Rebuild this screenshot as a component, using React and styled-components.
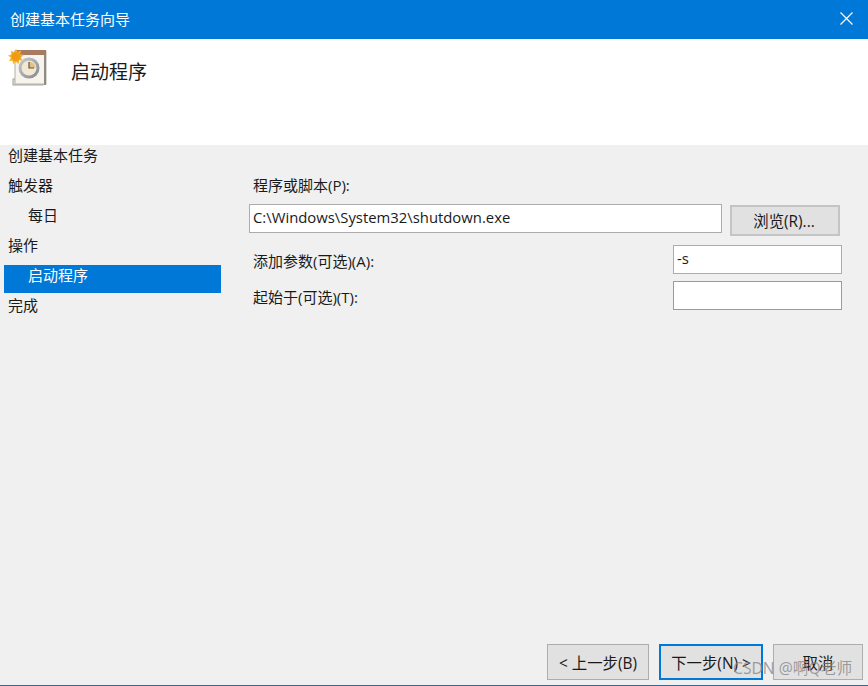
import React from 'react';
import styled, { createGlobalStyle } from 'styled-components';

const GlobalStyle = createGlobalStyle`
  html, body { margin: 0; padding: 0; background: #f0f0f0; }
  * { box-sizing: border-box; }
  body { font-family: "Open Sans", "Noto Sans CJK SC", sans-serif; color: #1a1a1a; }
`;

const Window = styled.div`
  position: relative;
  width: 868px;
  height: 686px;
  display: flex;
  flex-direction: column;
  overflow: hidden;
  background: #f0f0f0;
  border-bottom: 1px solid #0078d7;
`;

const TitleBar = styled.div`
  height: 39px;
  flex: none;
  background: #0078d7;
  color: #fff;
  font-size: 15px;
  padding: 0 15px 2px 10px;
  display: flex;
  align-items: center;
  justify-content: space-between;
`;

const Header = styled.div`
  height: 106px;
  flex: none;
  background: #fff;
  display: flex;
  align-items: flex-start;
  padding: 8px 0 0 7px;
  gap: 24px;
`;

const HeaderTitle = styled.div`
  font-size: 19px;
  line-height: 26px;
  margin-top: 12px;
`;

const Body = styled.div`
  flex: 1;
  display: flex;
  min-height: 0;
`;

const Sidebar = styled.div`
  width: 221px;
  flex: none;
  padding-left: 4px;
  display: flex;
  flex-direction: column;
  gap: 8px;
`;

const Step = styled.div`
  height: 22px;
  font-size: 15px;
  line-height: 20px;
  padding-left: ${p => (p.$sub ? 24 : 4)}px;
  color: #1a1a1a;
`;

const ActiveStep = styled(Step)`
  height: 28px;
  margin-bottom: -6px;
  color: #fff;
  background: #0078d7;
`;

const Content = styled.div`
  flex: 1;
  display: flex;
  flex-direction: column;
  justify-content: space-between;
  padding: 30px 5px 5px 28px;
`;

const Form = styled.div`
  display: flex;
  flex-direction: column;
`;

const Label = styled.div`
  font-size: 15px;
  height: 22px;
  line-height: 20px;
  padding-left: 4px;
`;

const FieldLabel = styled(Label)`
  margin-top: 5px;
`;

const PathRow = styled.div`
  display: flex;
  align-items: flex-start;
  gap: 8px;
  margin-top: 7px;
  margin-right: 23px;
`;

const TextBox = styled.div`
  height: 29px;
  background: #fff;
  border: 1px solid ${p => (p.$focus ? '#5ea8ec' : '#acacac')};
  font-size: 14.85px;
  line-height: 25px;
  padding-left: 3px;
  width: ${p => p.$width}px;
  color: #1a1a1a;
`;

const FieldRow = styled.div`
  display: flex;
  align-items: center;
  justify-content: space-between;
  margin-top: ${p => p.$top}px;
  margin-right: 21px;
`;

const Button = styled.div`
  width: ${p => p.$width}px;
  height: 36px;
  background: #e1e1e1;
  border: ${p => (p.$primary ? '2px solid #0078d7' : '1px solid #adadad')};
  font-size: 15.4px;
  display: flex;
  align-items: center;
  justify-content: center;
  color: #1a1a1a;
  flex: none;
`;

const BrowseButton = styled(Button)`
  height: 31px;
  margin-top: 1px;
  border: 2px solid #c4c4c4;
  padding-right: 2px;
`;

const Footer = styled.div`
  display: flex;
  justify-content: flex-end;
  gap: 10px;
`;

const Watermark = styled.div`
  position: absolute;
  left: 733px;
  top: 658px;
  font-size: 15.7px;
  line-height: 20px;
  color: rgba(130, 130, 130, 0.75);
  white-space: nowrap;
`;

const TaskIcon = () => (
  <svg width="40" height="40" viewBox="0 0 40 40">
    <defs>
      <radialGradient id="sun">
        <stop offset="0.45" stopColor="#f39a14" />
        <stop offset="1" stopColor="#fbd34a" />
      </radialGradient>
      <linearGradient id="ring" x1="0" y1="0" x2="1" y2="1">
        <stop offset="0" stopColor="#c9ccd0" />
        <stop offset="1" stopColor="#83878c" />
      </linearGradient>
    </defs>
    <rect x="6" y="32" width="30" height="6" fill="#e6e2dc" stroke="#a5a09a" />
    <rect x="8" y="4" width="31" height="33" fill="#f7f4ee" stroke="#b5aea5" />
    <rect x="8" y="3" width="31" height="5" fill="#a87a62" />
    <rect x="37" y="8" width="2" height="30" fill="#8f8a84" />
    <circle cx="22" cy="21" r="10.5" fill="url(#ring)" />
    <circle cx="22" cy="21" r="7.5" fill="#f3e9d2" />
    <path d="M22 21V14.5A6.5 6.5 0 0 1 28.5 21Z" fill="#e3c27f" />
    <path d="M22 15V21H27" fill="none" stroke="#555" strokeWidth="1.2" />
    <path
      transform="translate(0 1.5)"
      d="M9 0l1.6 3.6L14 2l-.9 3.7 3.9.9-3.2 2.3 2.2 3.2-3.9-.3-.3 3.9-3-2.5-2.6 2.9-.7-3.9-3.9.6L4 9.3.8 7.1l3.7-1.2L3.6 2.1l3.6 1.6z"
      fill="url(#sun)"
    />
  </svg>
);

const CloseIcon = () => (
  <svg width="13" height="13" viewBox="0 0 13 13">
    <path d="M.5.5l12 12M12.5.5l-12 12" stroke="#fff" strokeWidth="1.2" fill="none" />
  </svg>
);

const App = () => {
  return (
    <Window>
      <GlobalStyle />
      <TitleBar>
        创建基本任务向导
        <CloseIcon />
      </TitleBar>
      <Header>
        <TaskIcon />
        <HeaderTitle>启动程序</HeaderTitle>
      </Header>
      <Body>
        <Sidebar>
          <Step>创建基本任务</Step>
          <Step>触发器</Step>
          <Step $sub>每日</Step>
          <Step>操作</Step>
          <ActiveStep $sub>启动程序</ActiveStep>
          <Step>完成</Step>
        </Sidebar>
        <Content>
          <Form>
            <Label>程序或脚本(P):</Label>
            <PathRow>
              <TextBox $width={473}>C:\Windows\System32\shutdown.exe</TextBox>
              <BrowseButton $width={110}>浏览(R)...</BrowseButton>
            </PathRow>
            <FieldRow $top={9}>
              <FieldLabel>添加参数(可选)(A):</FieldLabel>
              <TextBox $width={169}>-s</TextBox>
            </FieldRow>
            <FieldRow $top={7}>
              <FieldLabel>起始于(可选)(T):</FieldLabel>
              <TextBox $width={169} $focus />
            </FieldRow>
          </Form>
          <Footer>
            <Button $width={102}>&lt; 上一步(B)</Button>
            <Button $width={104} $primary>下一步(N) &gt;</Button>
            <Button $width={90}>取消</Button>
          </Footer>
        </Content>
      </Body>
      <Watermark>CSDN @啊Q老师</Watermark>
    </Window>
  );
};

export default App;
